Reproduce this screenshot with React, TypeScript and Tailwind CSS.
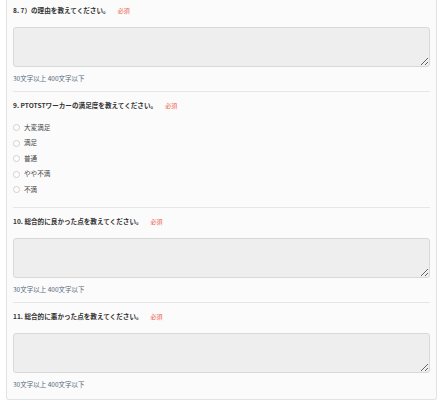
import React from 'react';

const FONT = '"Noto Sans CJK JP", "Liberation Sans", sans-serif';

const Required = () => (
  <span className="ml-[8px] text-[6px] font-normal text-[#ef5a4a]">必須</span>
);

const Title: React.FC<{ text: string; className?: string }> = ({ text, className }) => (
  <div className={`h-[10px] leading-[10px] text-[6.6px] font-bold text-[#333] whitespace-nowrap ${className ?? ''}`}>
    {text}
    <Required />
  </div>
);

const Hint = () => (
  <div className="mt-[6px] h-[10px] leading-[10px] text-[6.5px] text-[#56687a]">30文字以上 400文字以下</div>
);

const TextBlock: React.FC<{ title: string; first?: boolean }> = ({ title, first }) => (
  <div>
    <Title text={title} className={first ? '' : 'mt-[8px]'} />
    <textarea className="mt-[12px] block h-[40px] w-full rounded-[3px] border border-[#d9d9d9] bg-[#eeeeee] outline-none" />
    <Hint />
  </div>
);

const Divider = () => <div className="mt-[8px] border-t border-[#e6e6e6]" />;

const options = ['大変満足', '満足', '普通', 'やや不満', '不満'];

export default function App() {
  return (
    <div className="min-h-[400px] bg-white" style={{ fontFamily: FONT }}>
      <div className="ml-[6px] w-[431px] rounded-b-[3px] border border-t-0 border-[#e3e3e3] bg-[#fbfbfb] px-[6px] pt-[5px] pb-[10px]">
        <TextBlock title="8. 7）の理由を教えてください。" first />
        <Divider />

        <Title text="9. PTOTSTワーカーの満足度を教えてください。" className="mt-[8px]" />
        <div className="mt-[10px]">
          {options.map((o) => (
            <label key={o} className="flex h-[15.5px] items-center">
              <span className="block h-[7px] w-[7px] rounded-full border border-[#d0d0d0] bg-white" />
              <span className="ml-[4px] text-[6.6px] text-[#444]">{o}</span>
            </label>
          ))}
        </div>
        <div className="mt-[9px] border-t border-[#e6e6e6]" />

        <TextBlock title="10. 総合的に良かった点を教えてください。" />
        <Divider />
        <TextBlock title="11. 総合的に悪かった点を教えてください。" />
      </div>
    </div>
  );
}
